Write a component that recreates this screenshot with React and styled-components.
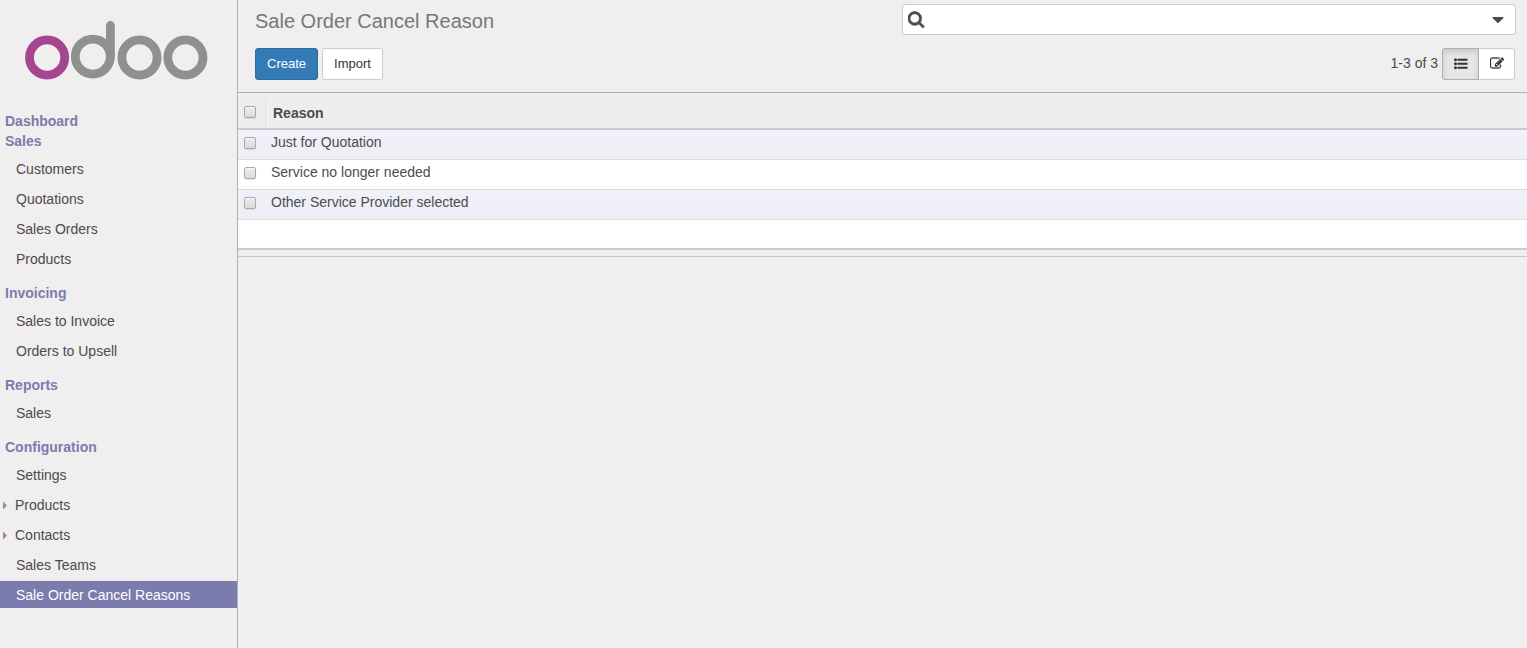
import React from "react";
import styled, { createGlobalStyle, css } from "styled-components";

const GlobalStyle = createGlobalStyle`
  *, *::before, *::after { box-sizing: border-box; }
  body {
    margin: 0;
    background: #f0eeee;
    color: #4c4c4c;
    font: 14px/20px "Liberation Sans", Arial, sans-serif;
  }
  button, input { font-family: inherit; }
`;

const Page = styled.div`
  display: flex;
  min-height: 100vh;
`;

const Sidebar = styled.aside`
  flex: 0 0 238px;
  border-right: 1px solid #afafb6;
`;

const LogoLink = styled.a`
  display: block;
  height: 100px;
  padding: 20px 24px 0;
  margin-bottom: 11px;
`;

const Logo = styled.svg`
  display: block;
  width: 185px;
  height: 62px;
`;

const Heading = styled.h2`
  margin: 0;
  padding: 0 5px;
  font-size: 14px;
  line-height: 20px;
  color: #7c7bad;
`;

const Menu = styled.ul`
  list-style: none;
  margin: 4px 0 11px;
  padding: 0;
  display: flex;
  flex-direction: column;
  gap: 3px;
`;

const MenuLink = styled.a`
  display: flex;
  align-items: center;
  height: 27px;
  padding-left: ${(p) => (p.$expandable ? 3 : 16)}px;
  color: ${(p) => (p.$active ? "#fff" : "#4c4c4c")};
  background: ${(p) => (p.$active ? "#7c7bad" : "transparent")};
  text-decoration: none;
`;

const Arrow = styled.svg`
  width: 4px;
  height: 8px;
  margin-right: 8px;
  fill: #909090;
`;

const Main = styled.main`
  flex: 1;
  min-width: 0;
`;

const ControlPanel = styled.header`
  display: flex;
  justify-content: space-between;
  padding: 4px 11px 12px 17px;
  border-bottom: 1px solid #afafb6;
`;

const PanelSide = styled.div`
  display: flex;
  flex-direction: column;
  justify-content: space-between;
  gap: 10px;
  height: 76px;
  flex: ${(p) => (p.$wide ? "0 0 614px" : "0 1 auto")};
`;

const Title = styled.h1`
  margin: 0;
  font-size: 20px;
  font-weight: 400;
  line-height: 34px;
  color: #777;
`;

const SearchBox = styled.label`
  display: flex;
  align-items: center;
  height: 31px;
  padding: 0 11px 0 5px;
  background: #fff;
  border: 1px solid #ccc;
  border-radius: 3px;
`;

const SearchInput = styled.input`
  flex: 1;
  min-width: 0;
  border: 0;
  outline: 0;
  padding: 0 8px;
  background: transparent;
  font-size: 14px;
`;

const PlainButton = styled.button`
  display: flex;
  padding: 0;
  border: 0;
  background: transparent;
  color: #4c4c4c;
`;

const Icon = styled.svg`
  display: block;
  fill: currentColor;
  width: ${(p) => p.$size}px;
  height: ${(p) => p.$size}px;
`;

const Actions = styled.div`
  display: flex;
  gap: 4px;
`;

const Button = styled.button`
  height: 32px;
  padding: 0 11px;
  font-size: 13px;
  line-height: 20px;
  border: 1px solid #ccc;
  border-radius: 3px;
  background: #fff;
  color: #333;
  ${(p) =>
    p.$primary &&
    css`
      background: #337ab7;
      border-color: #2e6da4;
      color: #fff;
    `}
`;

const PagerRow = styled.div`
  display: flex;
  justify-content: flex-end;
  align-items: center;
  gap: 4px;
  padding-right: 1px;
`;

const Pager = styled.span`
  padding-bottom: 2px;
`;

const ViewSwitch = styled.div`
  display: flex;
`;

const ViewButton = styled.button`
  display: flex;
  align-items: center;
  justify-content: center;
  width: 36px;
  height: 32px;
  padding: 0;
  color: #333;
  background: #fff;
  border: 1px solid #ccc;
  border-left-width: 0;
  border-radius: 0 3px 3px 0;
  ${(p) =>
    p.$active &&
    css`
      width: 37px;
      background: #e6e6e6;
      border: 1px solid #adadad;
      border-radius: 3px 0 0 3px;
      box-shadow: inset 0 3px 5px rgba(0, 0, 0, 0.125);
    `}
`;

const Table = styled.table`
  width: 100%;
  border-collapse: separate;
  border-spacing: 0;
  table-layout: fixed;
  background: #fff;
  border-bottom: 1px solid #c8c8c8;
`;

const CheckColumn = styled.col`
  width: 28px;
`;

const HeadCell = styled.th`
  height: 37px;
  padding: ${(p) => (p.$check ? "6px 0 0 6px" : "4px 7px 0")};
  text-align: left;
  vertical-align: middle;
  background: #eee;
  border-bottom: 2px solid #cacaca;
`;

const Divided = styled.div`
  display: flex;
  align-items: center;
  height: 29px;
  padding-bottom: 3px;
  border-right: 1px solid #dfdfdf;
`;

const Row = styled.tr`
  background: ${(p) => (p.$tinted ? "linear-gradient(#f0f0fa, #eeeef6)" : "#fff")};
`;

const Cell = styled.td`
  height: 30px;
  padding: ${(p) => (p.$check ? "7px 0 0 6px" : "2px 5px 0")};
  vertical-align: top;
  border-bottom: 1px solid #dbdbe0;
`;

const EmptyCell = styled.td`
  height: 28px;
  padding: 0;
`;

const FootCell = styled.td`
  height: 8px;
  padding: 0;
  background: #eee;
  border-top: 2px solid #cacaca;
`;

const Checkbox = styled.input`
  appearance: none;
  display: block;
  width: 12px;
  height: 12px;
  margin: 0;
  border: 1px solid #a8a8a8;
  border-radius: 2px;
  background: linear-gradient(#ededed, #dadada);
  box-shadow: 0 1px 1px rgba(0, 0, 0, 0.1), inset 0 1px 1px rgba(255, 255, 255, 0.7);
  &:checked { background: #7c7bad; }
`;

const sections = [
  {
    title: "Sales",
    items: [{ label: "Customers" }, { label: "Quotations" }, { label: "Sales Orders" }, { label: "Products" }],
  },
  { title: "Invoicing", items: [{ label: "Sales to Invoice" }, { label: "Orders to Upsell" }] },
  { title: "Reports", items: [{ label: "Sales" }] },
  {
    title: "Configuration",
    items: [
      { label: "Settings" },
      { label: "Products", expandable: true },
      { label: "Contacts", expandable: true },
      { label: "Sales Teams" },
      { label: "Sale Order Cancel Reasons", active: true },
    ],
  },
];

const reasons = ["Just for Quotation", "Service no longer needed", "Other Service Provider selected"];

const SEARCH =
  "M1216 832q0-185-131.5-316.5t-316.5-131.5-316.5 131.5-131.5 316.5 131.5 316.5 316.5 131.5 316.5-131.5 131.5-316.5zm512 832q0 52-38 90t-90 38q-54 0-90-38l-343-342q-179 124-399 124-143 0-273.5-55.5t-225-150-150-225-55.5-273.5 55.5-273.5 150-225 225-150 273.5-55.5 273.5 55.5 225 150 150 225 55.5 273.5q0 220-124 399l343 343q37 37 37 90z";
const EDIT =
  "M888 1184l116-116-152-152-116 116v56h96v96h56zm440-720q-16-16-33 1l-350 350q-17 17-1 33t33-1l350-350q17-17 1-33zm80 594v190q0 119-84.5 203.5t-203.5 84.5h-832q-119 0-203.5-84.5t-84.5-203.5v-832q0-119 84.5-203.5t203.5-84.5h832q63 0 117 25 15 7 18 23 3 17-9 29l-49 49q-14 14-32 8-23-6-45-6h-832q-66 0-113 47t-47 113v832q0 66 47 113t113 47h832q66 0 113-47t47-113v-126q0-13 9-22l64-64q15-15 35-7t20 29zm-96-738l288 288-672 672h-288v-288zm444 132l-92 92-288-288 92-92q28-28 68-28t68 28l152 152q28 28 28 68t-28 68z";

function OdooLogo() {
  return (
    <Logo viewBox="24 20 185 62" fill="none" strokeWidth="8.8" strokeLinecap="round" role="img" aria-label="odoo">
      <circle cx="47.1" cy="57.5" r="17.6" stroke="#a64690" />
      <g stroke="#8f918f">
        <circle cx="92.8" cy="56.6" r="17.5" />
        <path d="M110.4 25.5V57" />
        <circle cx="139.5" cy="57.5" r="17.6" />
        <circle cx="185.4" cy="57.5" r="17.6" />
      </g>
    </Logo>
  );
}

export default function App() {
  return (
    <>
      <GlobalStyle />
      <Page>
        <Sidebar>
          <LogoLink href="#home">
            <OdooLogo />
          </LogoLink>
          <nav>
            <Heading>Dashboard</Heading>
            {sections.map((section) => (
              <section key={section.title}>
                <Heading>{section.title}</Heading>
                <Menu>
                  {section.items.map((item) => (
                    <li key={item.label}>
                      <MenuLink href="#menu" $active={item.active} $expandable={item.expandable}>
                        {item.expandable && (
                          <Arrow viewBox="0 0 4 8" aria-hidden="true">
                            <path d="M0 0.5L4 4.5L0 8.5Z" />
                          </Arrow>
                        )}
                        {item.label}
                      </MenuLink>
                    </li>
                  ))}
                </Menu>
              </section>
            ))}
          </nav>
        </Sidebar>
        <Main>
          <ControlPanel>
            <PanelSide>
              <Title>Sale Order Cancel Reason</Title>
              <Actions>
                <Button type="button" $primary>Create</Button>
                <Button type="button">Import</Button>
              </Actions>
            </PanelSide>
            <PanelSide $wide>
              <SearchBox>
                <Icon viewBox="96 96 1696 1696" $size={17} aria-hidden="true">
                  <path d={SEARCH} stroke="currentColor" strokeWidth="30" />
                </Icon>
                <SearchInput type="text" aria-label="Search" />
                <PlainButton type="button" aria-label="Advanced search">
                  <Icon viewBox="0 0 12 12" $size={12}>
                    <path d="M1 3H11Q12 3.2 11.2 4.2L6.7 8.7Q6 9.2 5.3 8.7L0.8 4.2Q0 3.2 1 3Z" />
                  </Icon>
                </PlainButton>
              </SearchBox>
              <PagerRow>
                <Pager>1-3 of 3</Pager>
                <ViewSwitch>
                  <ViewButton type="button" aria-label="List" $active>
                    <Icon viewBox="0 0 14 14" $size={14}>
                      <circle cx="1.5" cy="2.7" r="1.5" />
                      <circle cx="1.5" cy="6.7" r="1.5" />
                      <circle cx="1.5" cy="10.7" r="1.5" />
                      <path d="M3.5 1.7h10v2h-10zM3.5 5.7h10v2h-10zM3.5 9.7h10v2h-10z" />
                    </Icon>
                  </ViewButton>
                  <ViewButton type="button" aria-label="Form">
                    <Icon viewBox="0 64 1792 1792" $size={14}>
                      <path d={EDIT} stroke="currentColor" strokeWidth="40" />
                    </Icon>
                  </ViewButton>
                </ViewSwitch>
              </PagerRow>
            </PanelSide>
          </ControlPanel>
          <Table>
            <colgroup>
              <CheckColumn />
              <col />
            </colgroup>
            <thead>
              <tr>
                <HeadCell $check>
                  <Divided>
                    <Checkbox type="checkbox" aria-label="Select all" />
                  </Divided>
                </HeadCell>
                <HeadCell scope="col">Reason</HeadCell>
              </tr>
            </thead>
            <tbody>
              {reasons.map((reason, i) => (
                <Row key={reason} $tinted={i % 2 === 0}>
                  <Cell $check>
                    <Checkbox type="checkbox" aria-label={`Select ${reason}`} />
                  </Cell>
                  <Cell>{reason}</Cell>
                </Row>
              ))}
              <tr>
                <EmptyCell colSpan={2} />
              </tr>
            </tbody>
            <tfoot>
              <tr>
                <FootCell colSpan={2} />
              </tr>
            </tfoot>
          </Table>
        </Main>
      </Page>
    </>
  );
}
